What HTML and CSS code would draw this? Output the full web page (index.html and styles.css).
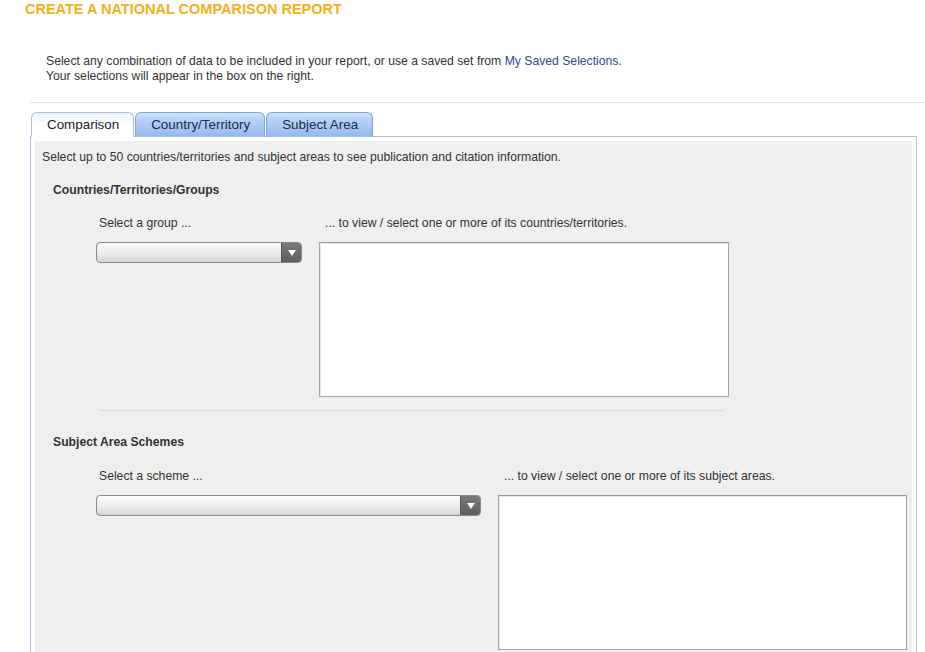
FILE: index.html
```html
<!DOCTYPE html>
<html>
<head>
<meta charset="utf-8">
<link rel="stylesheet" href="styles.css">
</head>
<body>
<h1 class="title">CREATE A NATIONAL COMPARISON REPORT</h1>
<div class="intro">
  <p>Select any combination of data to be included in your report, or use a saved set from <a href="#" class="link">My Saved Selections</a>.</p>
  <p>Your selections will appear in the box on the right.</p>
</div>
<hr class="rule">
<div class="tabs">
  <div class="tab active">Comparison</div>
  <div class="tab">Country/Territory</div>
  <div class="tab">Subject Area</div>
</div>
<div class="panel">
  <div class="panel-inner">
    <p class="desc">Select up to 50 countries/territories and subject areas to see publication and citation information.</p>

    <h2 class="section-title first">Countries/Territories/Groups</h2>
    <div class="picker picker-group">
      <div class="lbl lbl-left">Select a group ...</div>
      <div class="lbl lbl-right">... to view / select one or more of its countries/territories.</div>
      <div class="dropdown dd-group"><span class="dd-btn"><span class="tri"></span></span></div>
      <div class="listbox"></div>
    </div>

    <div class="sep"></div>

    <h2 class="section-title second">Subject Area Schemes</h2>
    <div class="picker picker-scheme">
      <div class="lbl lbl-left">Select a scheme ...</div>
      <div class="lbl lbl-right">... to view / select one or more of its subject areas.</div>
      <div class="dropdown dd-scheme"><span class="dd-btn"><span class="tri"></span></span></div>
      <div class="listbox"></div>
    </div>
  </div>
</div>
</body>
</html>
```

FILE: styles.css
```css
* { box-sizing: border-box; }

html, body {
  margin: 0;
  padding: 0;
  background: #ffffff;
}

body {
  font-family: "Liberation Sans", Arial, sans-serif;
  font-size: 12.2px;
  color: #333333;
  width: 925px;
  overflow: hidden;
}

.title {
  margin: 0;
  padding: 1px 0 0 25px;
  font-size: 14.5px;
  line-height: 16px;
  font-weight: bold;
  color: #f2b01c;
}

.intro {
  margin-top: 37px;
  padding-left: 46px;
}

.intro p {
  margin: 0;
  line-height: 15px;
}

.link {
  color: #2b4c92;
  text-decoration: none;
}

.rule {
  margin: 18px 0 0 30px;
  border: 0;
  height: 1px;
  background: #e2e2e2;
}

.tabs {
  display: flex;
  margin: 9px 0 0 31px;
  height: 25px;
  position: relative;
  z-index: 1;
}

.tab {
  height: 25px;
  padding: 0 14px 0 15px;
  font-size: 13.4px;
  line-height: 24px;
  color: #1a2a50;
  border: 1px solid #7ea3d6;
  border-bottom: 1px solid #a9c0d9;
  border-radius: 6px 6px 0 0;
  background: linear-gradient(to bottom, #cde0f9 0%, #aecdf5 45%, #94bbef 100%);
  margin-right: 1px;
}

.tab.active {
  color: #222222;
  background: linear-gradient(to bottom, #eef4fb 0%, #ffffff 60%);
  border-color: #a9c0d9;
  border-bottom-color: #ffffff;
}

.panel {
  margin: -1px 8px 0 30px;
  border: 1px solid #a9c0d9;
  border-bottom: 0;
  padding: 4px 4px 0 4px;
  background: #ffffff;
}

.panel-inner {
  background: #efefef;
  padding: 9px 7px 40px 7px;
}

.desc {
  margin: 0;
  line-height: 15px;
}

.section-title {
  margin: 0 0 0 11px;
  font-size: 12.2px;
  line-height: 15px;
  font-weight: bold;
  color: #333333;
}

.section-title.first { margin-top: 18px; }
.section-title.second { margin-top: 24px; }

.picker {
  display: grid;
  row-gap: 11px;
  margin-left: 54px;
  align-items: start;
}

.picker-group {
  margin-top: 18px;
  grid-template-columns: 223px 410px;
}

.picker-scheme {
  margin-top: 19px;
  grid-template-columns: 402px 409px;
}

.lbl {
  line-height: 15px;
}

.lbl-left { padding-left: 3px; }
.lbl-right { padding-left: 6px; }

.dropdown {
  height: 21px;
  border: 1px solid #8a8a8a;
  border-radius: 4px;
  background: linear-gradient(to bottom, #fbfbfb 0%, #eeeeee 50%, #d6d6d6 100%);
  display: flex;
  justify-content: flex-end;
  overflow: hidden;
}

.dd-group { width: 206px; }
.dd-scheme { width: 385px; }

.dd-btn {
  width: 20px;
  height: 100%;
  background: linear-gradient(to bottom, #7a7a7a 0%, #5e5e5e 100%);
  border-left: 1px solid #555555;
  display: flex;
  align-items: center;
  justify-content: center;
}

.tri {
  width: 0;
  height: 0;
  border-left: 4px solid transparent;
  border-right: 4px solid transparent;
  border-top: 6px solid #ffffff;
}

.listbox {
  height: 155px;
  background: #ffffff;
  border: 1px solid #a5a5a5;
  border-top-color: #999999;
  box-shadow: inset 1px 1px 0 #e6e6e6;
}

.sep {
  margin: 13px 0 0 57px;
  width: 625px;
  height: 1px;
  background: #dcdcdc;
}
```
